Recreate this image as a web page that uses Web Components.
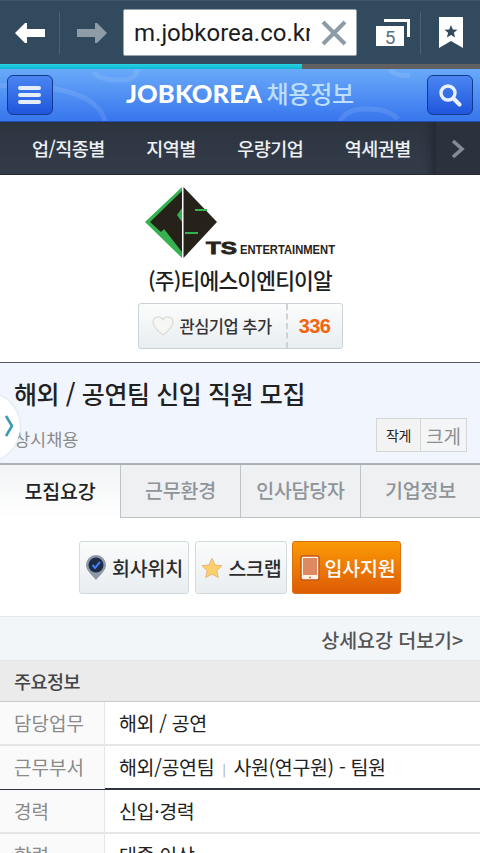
<!DOCTYPE html>
<html lang="ko">
<head>
<meta charset="utf-8">
<title>JOBKOREA</title>
<style>
html,body{margin:0;padding:0;height:853px;overflow:hidden;background:#fff;}
body{font-family:"Noto Sans CJK KR","Noto Sans",sans-serif;color:#222;position:relative;}
</style>
</head>
<body>
<browser-bar url="m.jobkorea.co.kr" tabs="5" progress="63"></browser-bar>
<site-header></site-header>
<cat-nav></cat-nav>
<company-card name="(주)티에스이엔티이알" count="336"></company-card>
<job-title title="해외 / 공연팀 신입 직원 모집" sub="상시채용"></job-title>
<job-tabs></job-tabs>
<action-bar></action-bar>
<more-link></more-link>
<info-table>
  <info-row label="담당업무">해외 / 공연</info-row>
  <info-row label="근무부서" dark>해외/공연팀 <i style="font-style:normal;font-size:12px;color:#999;margin:0 3px;vertical-align:1px">|</i> 사원(연구원) - 팀원</info-row>
  <info-row label="경력">신입·경력</info-row>
  <info-row label="학력">대졸 이상</info-row>
</info-table>
<side-handle></side-handle>

<script>
class BrowserBar extends HTMLElement{
    constructor(){
        super()
        this.attachShadow({mode:'open'})
    }
    connectedCallback(){
        const url=this.getAttribute('url'), tabs=this.getAttribute('tabs'), p=this.getAttribute('progress')
        this.shadowRoot.innerHTML=`
        <style>
            :host{display:block;height:69px;background:#324a5e;}
            .row{height:64px;box-sizing:border-box;border-top:1px solid #3f586c;display:grid;grid-template-columns:59px 1px 63px 234px 63px 1px 59px;align-items:center;}
            .row>svg{justify-self:center;}
            .row>svg.tabs{margin-left:9px;}
            .sep{width:1px;height:42px;background:#4b6274;}
            .url{height:47px;box-sizing:border-box;background:#fff;border:1px solid #9aa4ac;border-radius:2px;display:flex;align-items:center;padding-left:10px;}
            .url span{width:176px;overflow:hidden;white-space:nowrap;font:24px Roboto,sans-serif;color:#1c1c1c;flex:none;}
            .url svg{margin-left:11px;}
            .prog{height:5px;background:#616161;}
            .prog div{height:100%;background:linear-gradient(#27d3e0,#0fb4d6);}
        </style>
        <div class="row">
            <svg width="30" height="20" viewBox="0 0 30 20"><path d="M0 10 10 0h2v6h18v8H12v6h-2z" fill="#fff"/></svg>
            <div class="sep"></div>
            <svg width="30" height="20" viewBox="0 0 30 20"><path d="M30 10 20 0h-2v6H0v8h18v6h2z" fill="#8d9ca7"/></svg>
            <div class="url"><span>${url}</span>
                <svg width="26" height="26" viewBox="0 0 26 26"><path d="M2 2 24 24M24 2 2 24" stroke="#8d9ca7" stroke-width="4"/></svg>
            </div>
            <svg class="tabs" width="35" height="28" viewBox="0 0 35 28">
                <path d="M8 0h26v18h-3V3H8z" fill="#fff"/>
                <rect x="0" y="7" width="28" height="20" fill="#fff"/>
                <text x="14" y="24.5" text-anchor="middle" font-family="Roboto" font-size="19" fill="#5b7080">${tabs}</text>
            </svg>
            <div class="sep"></div>
            <svg width="24" height="31" viewBox="0 0 24 31"><path d="M0 0h24v31l-12-7-12 7z" fill="#fff"/><path d="m12 8 1.800 4.500 4.700.3-3.600 3 1.200 4.700-4.100-2.600-4.100 2.600 1.200-4.700-3.600-3 4.700-.3z" fill="#324a5e"/></svg>
        </div>
        <div class="prog"><div style="width:${p}%"></div></div>
        `
    }
}
customElements.define('browser-bar',BrowserBar)

class SiteHeader extends HTMLElement{
    constructor(){
        super()
        this.attachShadow({mode:'open'})
    }
    connectedCallback(){
        this.shadowRoot.innerHTML=`
        <style>
            :host{display:block;height:52px;background:linear-gradient(#69aaf9,#3a78ee 95%);border-bottom:1px solid #1e4fb8;position:relative;overflow:hidden;}
            .deco{position:absolute;left:0;top:0;}
            .bar{position:relative;height:100%;display:flex;align-items:center;justify-content:space-between;padding:0 7px;}
            .btn{width:46px;height:40px;box-sizing:border-box;border:1px solid #123a8c;border-radius:6px;background:linear-gradient(#4b86f2,#1f56dc);display:flex;align-items:center;justify-content:center;margin-top:-1px;}
            .logo{flex:1;text-align:center;white-space:nowrap;line-height:28px;margin-top:-2px;}
            .logo b{font:900 25.5px Lato,"Liberation Sans",sans-serif;letter-spacing:.1px;color:#fff;}
            .logo span{font-weight:500;color:#bcdeff;font-size:24px;letter-spacing:-.2px;}
        </style>
        <svg class="deco" width="480" height="52" viewBox="0 0 480 52" fill="none" stroke="#fff" stroke-opacity=".1" stroke-width="5">
            <path d="M-10 17C60 15 105 25 106 60"/>
            <path d="M94 3c4 8 18 8 30 8 8 0 12-4 14-11"/>
            <path d="M338 60c2-16 14-20 28-20 14 0 24 2 32 10"/>
            <path d="M390 0c2 4 10 8 20 6"/>
        </svg>
        <div class="bar">
            <div class="btn"><svg width="24" height="20" viewBox="0 0 24 20" fill="#e4eeff"><rect y="1" width="23" height="4" rx="2"/><rect y="8" width="23" height="4" rx="2"/><rect y="15" width="23" height="4" rx="2"/></svg></div>
            <div class="logo"><b>JOBKOREA</b> <span>채용정보</span></div>
            <div class="btn"><svg width="24" height="24" viewBox="0 0 24 24" fill="none" stroke="#e8f1ff"><circle cx="10" cy="10" r="7" stroke-width="3.4"/><path d="m15.500 15.500 6 6" stroke-width="4" stroke-linecap="round"/></svg></div>
        </div>
        `
    }
}
customElements.define('site-header',SiteHeader)

class CatNav extends HTMLElement{
    constructor(){
        super()
        this.attachShadow({mode:'open'})
    }
    connectedCallback(){
        const items=['업/직종별','지역별','우량기업','역세권별']
        this.shadowRoot.innerHTML=`
        <style>
            :host{display:flex;height:53px;background:linear-gradient(#2c3440,#343c49);box-sizing:border-box;border-bottom:1px solid #262c36;}
            ul{list-style:none;margin:0;padding:0 0 0 32px;flex:1;display:flex;gap:41.4px;align-items:center;white-space:nowrap;overflow:hidden;box-shadow:inset -12px 0 10px -8px #222831;}
            li{font-size:18.5px;font-weight:500;letter-spacing:-.5px;color:#eef0f3;}
            .more{width:44px;background:#2b323d;display:flex;align-items:center;justify-content:center;flex:none;padding-top:2px;}
        </style>
        <ul>${items.map(i=>`<li>${i}</li>`).join('')}</ul>
        <div class="more"><svg width="14" height="20" viewBox="0 0 14 20" fill="none"><path d="m2 2 9 8-9 8" stroke="#858c96" stroke-width="3.6"/></svg></div>
        `
    }
}
customElements.define('cat-nav',CatNav)

class CompanyCard extends HTMLElement{
    constructor(){
        super()
        this.attachShadow({mode:'open'})
    }
    connectedCallback(){
        this.shadowRoot.innerHTML=`
        <style>
            :host{display:flex;flex-direction:column;align-items:center;height:188px;box-sizing:border-box;border-bottom:1px solid #555b63;background:#fff;padding-top:11px;}
            svg.logo{display:block;overflow:visible;}
            svg text{font-family:"Liberation Sans",sans-serif;fill:#27231a;}
            h1{margin:7px 0 0;font-size:21.5px;line-height:30px;font-weight:500;letter-spacing:-.85px;color:#1e1e1e;}
            .fav{margin-top:8px;width:205px;height:46px;box-sizing:border-box;border:1px solid #ccd3d8;border-radius:3px;background:linear-gradient(#fbfcfc,#e9eef1);display:flex;align-items:center;}
            .l{flex:1;display:flex;align-items:center;padding-left:13px;font-size:16.5px;font-weight:500;letter-spacing:-.5px;color:#333;gap:6px;white-space:nowrap;}
            .n{width:56px;text-align:center;border-left:2px dashed #ccd3d8;height:100%;font:700 20px/44px "Liberation Sans",sans-serif;letter-spacing:-.6px;color:#f4640f;box-sizing:border-box;}
        </style>
        <svg class="logo" width="192" height="72" viewBox="0 0 192 72">
            <path d="M38 1 1 36l37 36z" fill="#35b24f"/>
            <path d="M38 5 6 36l11 10 3-3 18 23z" fill="#26221a"/>
            <path d="M39.500 1 73 36 39.500 72z" fill="#26221a"/>
            <path d="M38 22l-5 7 5 7z" fill="#35b24f"/>
            <path d="M51 24h12M41 47h13" stroke="#35b24f" stroke-width="2"/>
            <text x="62" y="68" font-size="17" font-weight="700" stroke="#27231a" stroke-width=".8" textLength="31" lengthAdjust="spacingAndGlyphs">TS</text>
            <text x="96" y="68" font-size="13" font-weight="700" textLength="95" lengthAdjust="spacingAndGlyphs">ENTERTAINMENT</text>
        </svg>
        <h1>${this.getAttribute('name')}</h1>
        <div class="fav">
            <div class="l">
                <svg width="22" height="20" viewBox="0 0 23 21"><path d="M11.500 20C4 14 1 10.500 1 6.500 1 3 3.500 1 6.500 1c2 0 4 1 5 3 1-2 3-3 5-3 3 0 5.500 2 5.500 5.500 0 4-3 7.500-10.500 13.500z" fill="#f6f6f4" stroke="#dcdcd8" stroke-width="1.400"/></svg>
                <span>관심기업 추가</span>
            </div>
            <div class="n">${this.getAttribute('count')}</div>
        </div>
        `
    }
}
customElements.define('company-card',CompanyCard)

class JobTitle extends HTMLElement{
    constructor(){
        super()
        this.attachShadow({mode:'open'})
    }
    connectedCallback(){
        this.shadowRoot.innerHTML=`
        <style>
            :host{display:block;height:100px;box-sizing:border-box;background:#f1f6fe;padding:13px 13px 0 14px;}
            h2{margin:0;font-size:25px;line-height:34px;font-weight:500;letter-spacing:-.4px;color:#222;white-space:nowrap;}
            .meta{display:flex;justify-content:space-between;align-items:flex-end;margin-top:8px;}
            .sub{font-size:17.5px;letter-spacing:0;color:#8b8b8b;line-height:30px;position:relative;top:3px;}
            .size{display:flex;border:1px solid #d3d5d6;height:34px;box-sizing:border-box;margin-bottom:-1px;}
            .size span{width:43px;display:flex;align-items:center;justify-content:center;background:#f3f3f3;font-size:14px;letter-spacing:-.5px;color:#222;}
            .size span+span{border-left:1px solid #d3d5d6;font-size:19px;color:#8f8f8f;letter-spacing:0;width:45px;background:#f3f5f7;}
        </style>
        <h2>${this.getAttribute('title')}</h2>
        <div class="meta">
            <div class="sub">${this.getAttribute('sub')}</div>
            <div class="size"><span>작게</span><span>크게</span></div>
        </div>
        `
    }
}
customElements.define('job-title',JobTitle)

class JobTabs extends HTMLElement{
    constructor(){
        super()
        this.attachShadow({mode:'open'})
    }
    connectedCallback(){
        const tabs=['모집요강','근무환경','인사담당자','기업정보']
        this.shadowRoot.innerHTML=`
        <style>
            :host{display:grid;grid-template-columns:repeat(4,120px);height:55px;box-sizing:border-box;border-top:2px solid #a9b0b6;}
            div{display:flex;align-items:center;justify-content:center;background:#eef0f1;border-left:1px solid #bcc3c9;border-bottom:1px solid #bcc3c9;box-sizing:border-box;font-size:19.5px;font-weight:500;letter-spacing:-.2px;color:#8e9499;padding-bottom:3px;white-space:nowrap;}
            .on{background:linear-gradient(#f2f4f5,#fff);border:0;color:#222;}
        </style>
        ${tabs.map((t,i)=>`<div class="${i?'':'on'}">${t}</div>`).join('')}
        `
    }
}
customElements.define('job-tabs',JobTabs)

class ActionBar extends HTMLElement{
    constructor(){
        super()
        this.attachShadow({mode:'open'})
    }
    connectedCallback(){
        this.shadowRoot.innerHTML=`
        <style>
            :host{display:flex;justify-content:center;gap:5.5px;height:98px;box-sizing:border-box;padding:23px 0 0 0;background:#fff;}
            a{height:53px;box-sizing:border-box;border:1px solid #d3dade;border-radius:3px;background:linear-gradient(#fbfcfc,#e9edf0);display:flex;align-items:center;justify-content:center;gap:5px;font-size:19.5px;font-weight:500;letter-spacing:-.2px;color:#2c2c2c;white-space:nowrap;}
            .pin{width:110px;}
            .star{width:92px;padding-left:2px;}
            .apply{width:109px;padding-left:2px;background:linear-gradient(#fb9a05,#dd5b05);border-color:#d8700f;color:#fff;}
        </style>
        <a class="pin">
            <svg width="22" height="26" viewBox="0 0 22 26"><path d="M11 25C5 18 1 15 1 10a10 10 0 0 1 20 0c0 5-4 8-10 15z" fill="#8b98a6"/><circle cx="11" cy="10" r="7.500" fill="#1f2b44"/><path d="m7.500 10 2.500 3 5-6" fill="none" stroke="#3b82f0" stroke-width="2"/></svg>
            <span>회사위치</span>
        </a>
        <a class="star">
            <svg width="22" height="22" viewBox="0 0 22 22"><path d="m11 1.500 3 6.500 7 .8-5.200 4.800 1.500 7L11 17l-6.300 3.600 1.500-7L1 8.800 8 8z" fill="#fcd06c" stroke="#eab576"/></svg>
            <span>스크랩</span>
        </a>
        <a class="apply">
            <svg width="20" height="26" viewBox="0 0 20 26"><rect x="1" y="1" width="18" height="24" rx="2" fill="#fff3e6" stroke="#c8581a" stroke-width="1.500"/><rect x="3" y="3" width="14" height="17" fill="#dd8a60"/><circle cx="10" cy="22.500" r="1" fill="#d56a30"/></svg>
            <span>입사지원</span>
        </a>
        `
    }
}
customElements.define('action-bar',ActionBar)

class MoreLink extends HTMLElement{
    constructor(){
        super()
        this.attachShadow({mode:'open'})
    }
    connectedCallback(){
        this.shadowRoot.innerHTML=`
        <style>
            :host{display:block;height:44px;box-sizing:border-box;background:#f2f6f9;border-top:1px solid #e1e8ed;text-align:right;padding-right:17px;font-size:19.5px;line-height:45px;letter-spacing:-.05px;font-weight:500;color:#555;white-space:nowrap;}
        </style>
        상세요강 더보기&gt;
        `
    }
}
customElements.define('more-link',MoreLink)

class InfoTable extends HTMLElement{
    constructor(){
        super()
        this.attachShadow({mode:'open'})
    }
    connectedCallback(){
        this.shadowRoot.innerHTML=`
        <style>
            :host{display:block;}
            h3{margin:0;height:42px;box-sizing:border-box;background:#ebebeb;border-top:1px solid #e5e5e5;border-bottom:1px solid #c9c9c9;padding-left:14px;font-size:18.5px;line-height:41px;font-weight:500;letter-spacing:-.5px;color:#444;}
        </style>
        <h3>주요정보</h3>
        <slot></slot>
        `
    }
}
customElements.define('info-table',InfoTable)

class InfoRow extends HTMLElement{
    constructor(){
        super()
        this.attachShadow({mode:'open'})
    }
    connectedCallback(){
        this.shadowRoot.innerHTML=`
        <style>
            :host{display:grid;grid-template-columns:105px 1fr;height:44px;box-sizing:border-box;border-bottom:2px solid #e6e6e6;}
            :host([dark]){border-bottom-color:#2e3540;}
            .k{background:#fafafa;border-right:1px solid #e6e6e6;padding-left:14px;font-size:19px;line-height:41px;letter-spacing:0;color:#8a8a8a;}
            .v{padding-left:14px;font-size:19.5px;line-height:41px;letter-spacing:-.35px;color:#222;white-space:nowrap;}
        </style>
        <div class="k">${this.getAttribute('label')}</div>
        <div class="v"><slot></slot></div>
        `
    }
}
customElements.define('info-row',InfoRow)

class SideHandle extends HTMLElement{
    constructor(){
        super()
        this.attachShadow({mode:'open'})
    }
    connectedCallback(){
        this.shadowRoot.innerHTML=`
        <style>
            :host{position:absolute;left:-50px;top:392px;width:70px;height:70px;border-radius:50%;background:#fff;box-shadow:0 0 2px #c5c8cb;}
            svg{position:absolute;left:54px;top:22px;}
        </style>
        <svg width="10" height="24" viewBox="0 0 10 24" fill="none"><path d="m2 2 6 10-6 10" stroke="#3c9ab4" stroke-width="2.6"/></svg>
        `
    }
}
customElements.define('side-handle',SideHandle)
</script>
</body>
</html>
